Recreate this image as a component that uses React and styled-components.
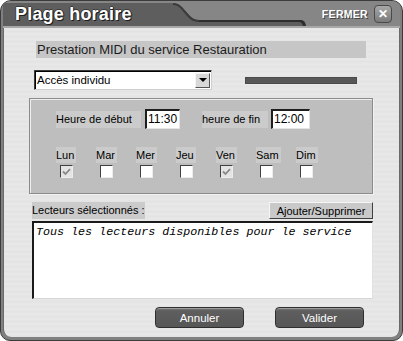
import React, { useState } from 'react';
import styled, { createGlobalStyle } from 'styled-components';

const GlobalStyle = createGlobalStyle`
  html, body {
    margin: 0;
    padding: 0;
    background: #ffffff;
  }
  body {
    font-family: "Liberation Sans", Arial, sans-serif;
  }
`;

const titleShape = `url("data:image/svg+xml;utf8,${encodeURIComponent(
  "<svg xmlns='http://www.w3.org/2000/svg' width='403' height='25'>" +
    "<path d='M0 2 H172 C184 2 186 19 198 19 H300 Q304 19 305 25 H0 Z' fill='#5e5e5e'/>" +
    "<path d='M198 19 H300 Q304 19 305 25 H302 Q301 21 298 21 H198 Z' fill='#2e2e2e'/>" +
    "<path d='M172 2 C184 2 186 19 198 19 V21 C184 21 183 4 172 4 Z' fill='#3a3a3a'/>" +
  "</svg>"
)}")`;

const Window = styled.div`
  width: 403px;
  height: 341px;
  box-sizing: border-box;
  border: 1px solid #3c3c3c;
  border-radius: 11px 11px 10px 10px;
  background: #808080;
  padding: 0 2px 3px 2px;
  display: flex;
  flex-direction: column;
  overflow: hidden;
`;

const TitleBar = styled.div`
  height: 25px;
  flex: 0 0 25px;
  display: flex;
  align-items: center;
  background-color: #868686;
  background-image: ${titleShape};
  background-repeat: no-repeat;
  background-position: -2px 0;
  border-bottom: 2px solid #a8a8a8;
  padding: 0 8px 0 12px;
`;

const Title = styled.div`
  flex: 1;
  color: #ffffff;
  font-family: "Liberation Sans", Arial, sans-serif;
  font-weight: 900;
  font-size: 18px;
  letter-spacing: 0.2px;
  text-shadow: 1px 1px 0 #1e1e1e, -1px 0 0 #3a3a3a, 0 -1px 0 #3a3a3a, 1px 0 0 #2a2a2a;
  padding-top: 1px;
`;

const CloseLabel = styled.span`
  color: #ffffff;
  font-weight: bold;
  font-size: 10.5px;
  letter-spacing: 0.3px;
  text-shadow: 1px 1px 0 #444;
  margin-right: 6px;
`;

const CloseButton = styled.button`
  width: 18px;
  height: 18px;
  padding: 0;
  border: 1px solid #4a4a4a;
  border-radius: 4px;
  background: linear-gradient(#a8a8a8, #7a7a7a);
  color: #ffffff;
  font-weight: bold;
  font-size: 12px;
  line-height: 14px;
  font-family: "Liberation Sans", Arial, sans-serif;
  display: flex;
  align-items: center;
  justify-content: center;
`;

const Body = styled.div`
  flex: 1;
  display: flex;
  flex-direction: column;
  background: repeating-linear-gradient(180deg, #e6e6e6 0px, #e9e9e9 2px, #e2e2e2 3px, #e7e7e7 5px);
  border-radius: 0 0 8px 8px;
  border-left: 1px solid #6a6a6a;
  border-right: 1px solid #6a6a6a;
  padding: 13px 0 0 0;
`;

const SectionLabel = styled.div`
  margin-left: 32px;
  width: 330px;
  height: 17px;
  background: #c6c6c6;
  color: #1c1c1c;
  font-size: 13px;
  line-height: 17px;
  padding-left: 1px;
  box-sizing: border-box;
`;

const SelectRow = styled.div`
  display: flex;
  align-items: center;
  margin: 12px 0 0 30px;
`;

const SelectBox = styled.div`
  width: 178px;
  height: 20px;
  box-sizing: border-box;
  background: #ffffff;
  border-top: 1px solid #3a3a3a;
  border-left: 1px solid #3a3a3a;
  border-right: 1px solid #cfcfcf;
  border-bottom: 1px solid #cfcfcf;
  box-shadow: inset 1px 1px 0 #000;
  display: flex;
  align-items: center;
  justify-content: space-between;
  padding: 0 1px 0 2px;
  font-size: 11.5px;
  color: #000;
`;

const Arrow = styled.div`
  width: 15px;
  height: 15px;
  box-sizing: border-box;
  background: #d8d8d8;
  border-top: 1px solid #f4f4f4;
  border-left: 1px solid #f4f4f4;
  border-right: 1px solid #555;
  border-bottom: 1px solid #555;
  display: flex;
  align-items: center;
  justify-content: center;
  &::after {
    content: "";
    border-left: 4px solid transparent;
    border-right: 4px solid transparent;
    border-top: 4px solid #000;
  }
`;

const ProgressBar = styled.div`
  width: 110px;
  height: 5px;
  margin-left: 33px;
  background: #575757;
  border: 1px solid #4a4a4a;
`;

const Group = styled.div`
  margin: 8px 0 0 25px;
  width: 344px;
  height: 96px;
  box-sizing: border-box;
  background: #bebebe;
  border: 1px solid #8c8c8c;
  box-shadow: inset 1px 1px 0 #eeeeee, 1px 1px 0 #f2f2f2;
  padding: 10px 0 0 26px;
`;

const TimeRow = styled.div`
  display: flex;
  align-items: center;
`;

const FieldLabel = styled.span`
  display: inline-block;
  background: #cbcbcb;
  color: #000;
  font-size: 11px;
  height: 17px;
  line-height: 17px;
  width: ${(p) => p.$w}px;
  margin-left: ${(p) => p.$ml || 0}px;
  box-sizing: border-box;
`;

const TimeInput = styled.div`
  width: ${(p) => p.$w}px;
  height: 20px;
  box-sizing: border-box;
  margin-left: ${(p) => p.$ml}px;
  background: #fff;
  border-top: 2px solid #1e1e1e;
  border-left: 2px solid #1e1e1e;
  border-right: 1px solid #e4e4e4;
  border-bottom: 1px solid #e4e4e4;
  font-size: 12px;
  line-height: 17px;
  padding-left: 1px;
  color: #000;
`;

const DaysRow = styled.div`
  display: flex;
  margin-top: 18px;
`;

const Day = styled.div`
  width: 40px;
  display: flex;
  flex-direction: column;
  align-items: flex-start;
`;

const DayLabel = styled.span`
  background: #cbcbcb;
  font-size: 11px;
  height: 16px;
  line-height: 16px;
  padding-right: 2px;
  color: #000;
`;

const Check = styled.div`
  width: 13px;
  height: 13px;
  box-sizing: border-box;
  margin: 2px 0 0 4px;
  background: ${(p) => (p.$checked ? '#e4e4e4' : '#ffffff')};
  border-top: 1px solid #404040;
  border-left: 1px solid #404040;
  border-right: 1px solid #ececec;
  border-bottom: 1px solid #ececec;
  display: flex;
  align-items: center;
  justify-content: center;
`;

const ListHeader = styled.div`
  display: flex;
  align-items: flex-end;
  justify-content: space-between;
  margin: 8px 0 0 28px;
  width: 341px;
`;

const SmallButton = styled.button`
  width: 104px;
  height: 17px;
  box-sizing: border-box;
  padding: 0;
  background: #c9c9c9;
  border-top: 1px solid #f6f6f6;
  border-left: 1px solid #f6f6f6;
  border-right: 1px solid #404040;
  border-bottom: 1px solid #404040;
  font-family: "Liberation Sans", Arial, sans-serif;
  font-size: 11px;
  color: #000;
`;

const ListBox = styled.div`
  margin: 2px 0 0 28px;
  width: 341px;
  height: 78px;
  box-sizing: border-box;
  background: #fff;
  border-top: 2px solid #1a1a1a;
  border-left: 2px solid #1a1a1a;
  border-right: 1px solid #e2e2e2;
  border-bottom: 1px solid #d6d6d6;
  padding: 2px 0 0 2px;
  font-family: "Liberation Mono", "Courier New", monospace;
  font-style: italic;
  font-size: 11.7px;
  color: #000;
`;

const Footer = styled.div`
  display: flex;
  justify-content: flex-end;
  gap: 31px;
  margin: 8px 35px 0 0;
`;

const ActionButton = styled.button`
  width: 89px;
  height: 21px;
  padding: 0;
  border: 1px solid #2e2e2e;
  border-radius: 4px;
  background: linear-gradient(#7a7a7a 0px, #5e5e5e 3px, #575757 100%);
  color: #ffffff;
  font-family: "Liberation Sans", Arial, sans-serif;
  font-size: 11.5px;
  box-shadow: inset 0 1px 0 #9a9a9a;
`;

const CheckMark = () => (
  <svg width="9" height="8" viewBox="0 0 9 8">
    <path d="M1 3.5 L3.5 6 L8 1.2" stroke="#8a8a8a" strokeWidth="1.8" fill="none" />
  </svg>
);

const days = [
  { label: 'Lun', checked: true },
  { label: 'Mar', checked: false },
  { label: 'Mer', checked: false },
  { label: 'Jeu', checked: false },
  { label: 'Ven', checked: true },
  { label: 'Sam', checked: false },
  { label: 'Dim', checked: false },
];

function PlageHoraire() {
  const [selected] = useState(days);

  return (
    <Window>
      <TitleBar>
        <Title>Plage horaire</Title>
        <CloseLabel>FERMER</CloseLabel>
        <CloseButton>✕</CloseButton>
      </TitleBar>
      <Body>
        <SectionLabel>Prestation MIDI du service Restauration</SectionLabel>
        <SelectRow>
          <SelectBox>
            <span>Accès individu</span>
            <Arrow />
          </SelectBox>
          <ProgressBar />
        </SelectRow>
        <Group>
          <TimeRow>
            <FieldLabel $w={85}>Heure de début</FieldLabel>
            <TimeInput $w={35} $ml={4}>11:30</TimeInput>
            <FieldLabel $w={66} $ml={22}>heure de fin</FieldLabel>
            <TimeInput $w={39} $ml={3}>12:00</TimeInput>
          </TimeRow>
          <DaysRow>
            {selected.map((d) => (
              <Day key={d.label}>
                <DayLabel>{d.label}</DayLabel>
                <Check $checked={d.checked}>{d.checked && <CheckMark />}</Check>
              </Day>
            ))}
          </DaysRow>
        </Group>
        <ListHeader>
          <FieldLabel $w={113}>Lecteurs sélectionnés :</FieldLabel>
          <SmallButton>Ajouter/Supprimer</SmallButton>
        </ListHeader>
        <ListBox>Tous les lecteurs disponibles pour le service</ListBox>
        <Footer>
          <ActionButton>Annuler</ActionButton>
          <ActionButton>Valider</ActionButton>
        </Footer>
      </Body>
    </Window>
  );
}

export default function App() {
  return (
    <>
      <GlobalStyle />
      <PlageHoraire />
    </>
  );
}
